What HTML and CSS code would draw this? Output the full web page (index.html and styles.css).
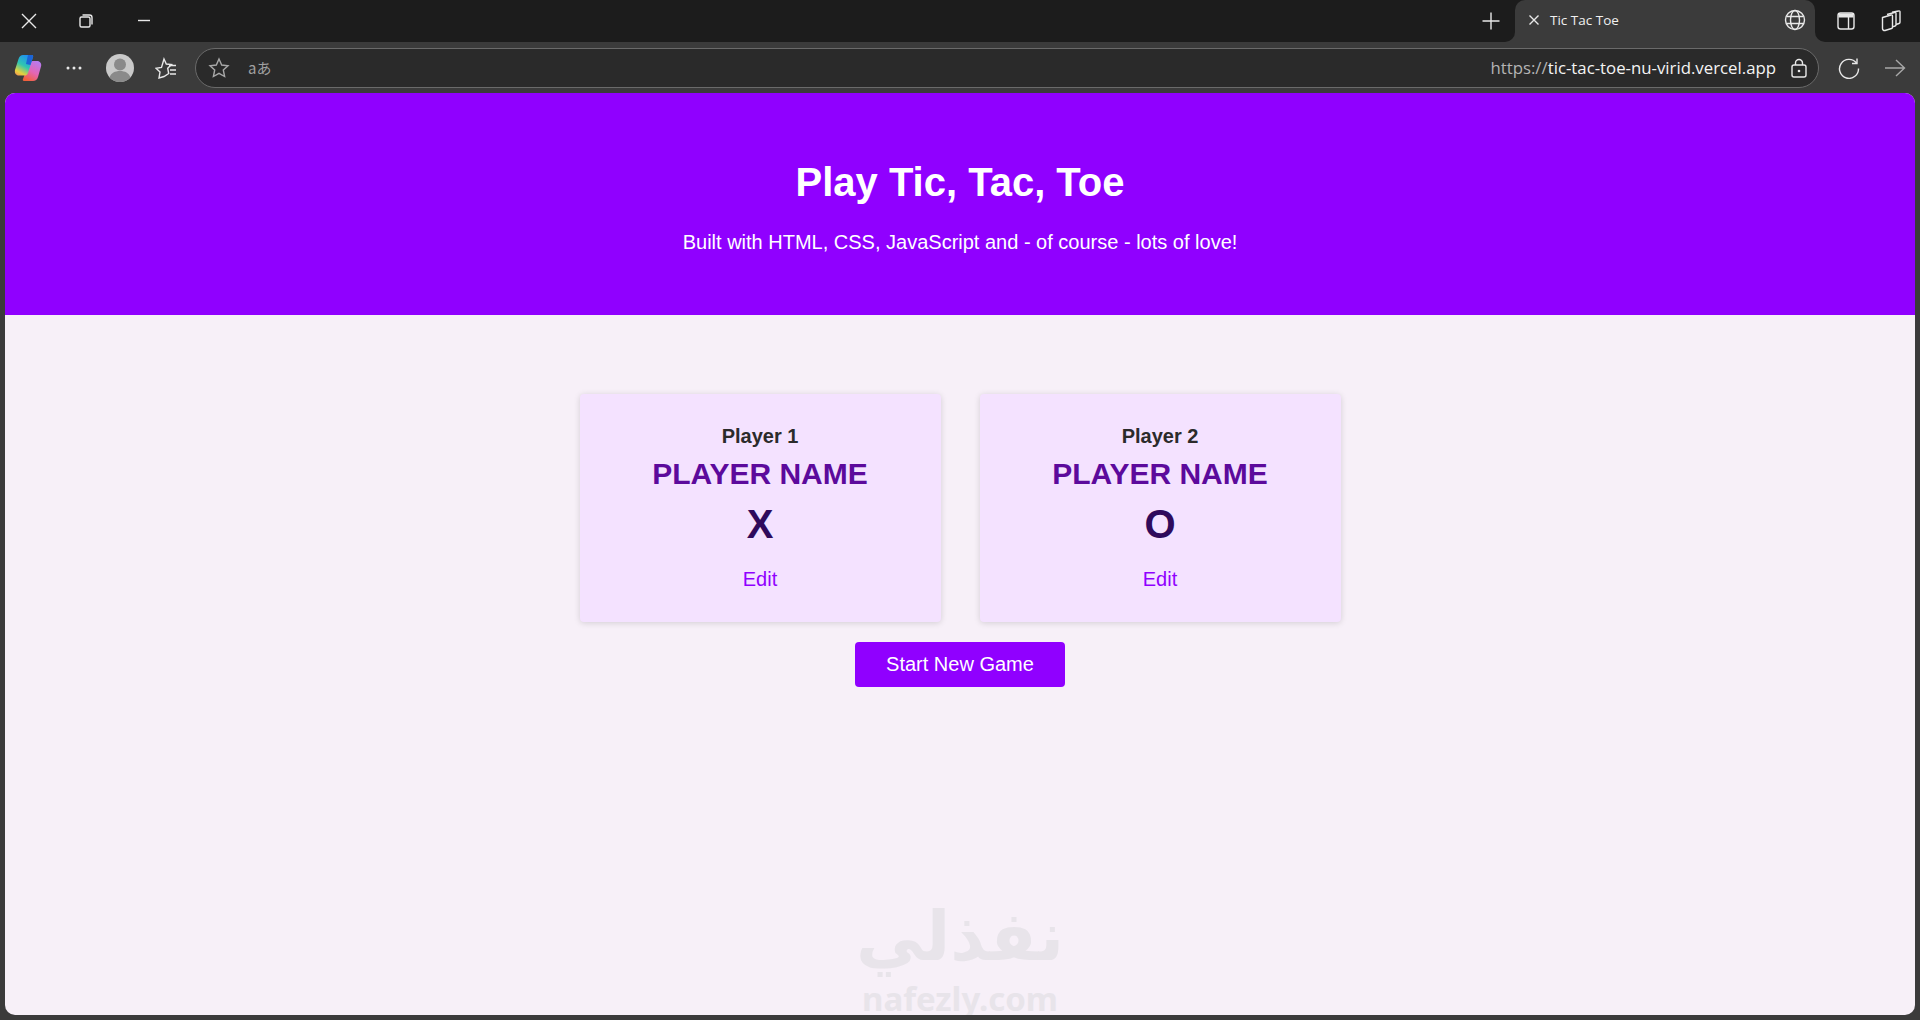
FILE: index.html

```html
<!DOCTYPE html>
<html lang="en">
<head>
    <meta charset="UTF-8">
    <meta name="viewport" content="width=device-width, initial-scale=1.0">
    <title>Tic Tac Toe</title>
    <link rel="stylesheet" href="styles.css">
</head>
<body>
    <div class="tabbar">
        <div class="tabbar-left">
            <span class="win-btn">
                <svg width="18" height="18" viewBox="0 0 18 18"><path d="M2 2l14 14M16 2L2 16" class="line"/></svg>
            </span>
            <span class="win-btn">
                <svg width="16" height="16" viewBox="0 0 16 16"><rect x="2" y="4" width="10" height="10" rx="1.5" class="line"/><path d="M4.500 2h7a2.500 2.500 0 0 1 2.500 2.500v7" class="line"/></svg>
            </span>
            <span class="win-btn">
                <svg width="14" height="14" viewBox="0 0 14 14"><path d="M1 6.500h12" class="line"/></svg>
            </span>
            <span class="tabbar-space"></span>
            <span class="new-tab">
                <svg width="20" height="20" viewBox="0 0 20 20"><path d="M10 1.500v17M1.500 10h17" class="line"/></svg>
            </span>
        </div>
        <div class="tab">
            <svg width="12" height="12" viewBox="0 0 12 12"><path d="M1.500 1.500l9 9M10.500 1.500l-9 9" class="line"/></svg>
            <span class="tab-title">Tic Tac Toe</span>
            <svg class="tab-globe" width="22" height="22" viewBox="0 0 22 22">
                <circle cx="11" cy="11" r="9.500" class="line"/>
                <ellipse cx="11" cy="11" rx="4.500" ry="9.500" class="line"/>
                <path d="M2.500 7.500h17M2.500 14.500h17" class="line"/>
            </svg>
        </div>
        <div class="tabbar-right">
            <span class="side-btn">
                <svg width="20" height="20" viewBox="0 0 20 20"><rect x="2" y="2" width="16" height="16" rx="2.500" class="line"/><path d="M2.500 2.500h15v4h-15z" fill="#e8e8e8"/><path d="M12.500 6v12" class="line"/></svg>
            </span>
            <span class="side-btn">
                <svg width="22" height="22" viewBox="0 0 22 22">
                    <path d="M2.500 7.500L11 5a1 1 0 0 1 1.500 1v11a1.500 1.500 0 0 1-1 1.500L5 20.500a2 2 0 0 1-2.500-2z" class="line"/>
                    <path d="M7 4.500l7.500-2a1 1 0 0 1 1.500 1v11a1.500 1.500 0 0 1-1 1.500l-2.500.8" class="line"/>
                    <path d="M12 2.300L18.500 1a1 1 0 0 1 1.500 1v10a1.500 1.500 0 0 1-1 1.500l-3 1" class="line"/>
                </svg>
            </span>
        </div>
    </div>

    <div class="toolbar">
        <span class="tool-btn">
            <svg width="28" height="28" viewBox="0 0 28 28">
                <defs>
                    <linearGradient id="cpLeft" x1="0.700" y1="0" x2="0.200" y2="1"><stop offset="0" stop-color="#1f8cf5"/><stop offset="0.5" stop-color="#2fc6b0"/><stop offset="0.85" stop-color="#e6d23c"/><stop offset="1" stop-color="#f0a050"/></linearGradient>
                    <linearGradient id="cpRight" x1="0.800" y1="0" x2="0.300" y2="1"><stop offset="0" stop-color="#b57cf2"/><stop offset="0.55" stop-color="#e466b4"/><stop offset="1" stop-color="#f2603c"/></linearGradient>
                </defs>
                <path d="M19 7h4c3 0 5 2.500 4 5.500L24 23c-.7 2.500-2.500 4-5 4h-9c-1 0-1.500-1-1-2l5-14c1-2.500 2.500-4 5-4z" fill="url(#cpRight)"/>
                <path d="M9 1h9c1 0 1.500 1 1 2l-5 16c-.7 2-2 2.500-3.500 2.500H5c-3 0-4.700-2.500-4-5.500L4.500 5C5.300 2.500 7 1 9 1z" fill="url(#cpLeft)"/>
                <path d="M14 1h4c1 0 1.500 1 1 2l-2.500 8-4.500-1z" fill="#1b64d6"/>
            </svg>
        </span>
        <span class="tool-btn">
            <svg width="16" height="4" viewBox="0 0 16 4"><circle cx="2" cy="2" r="1.500" fill="#e8e8e8"/><circle cx="8" cy="2" r="1.500" fill="#e8e8e8"/><circle cx="14" cy="2" r="1.500" fill="#e8e8e8"/></svg>
        </span>
        <span class="tool-btn">
            <svg width="28" height="28" viewBox="0 0 28 28"><circle cx="14" cy="14" r="14" fill="#c9c9c9"/><circle cx="14" cy="10.500" r="6" fill="#8a8a8a"/><path d="M3.500 23.500c1.500-4.500 5.500-6.500 10.500-6.500s9 2 10.500 6.500A14 14 0 0 1 14 28a14 14 0 0 1-10.500-4.500z" fill="#8a8a8a"/></svg>
        </span>
        <span class="tool-btn">
            <svg width="22" height="22" viewBox="0 0 22 22"><path d="M9 2l2.300 5 5.200.6-3.800 3.600 1 5.300L9 19.500 4 21l1-6-4-3.800 5.500-.8z" class="line"/><path d="M14 8.500h7M15 13h6M15 17h6" class="line"/></svg>
        </span>
        <div class="address">
            <svg width="22" height="22" viewBox="0 0 22 22"><path d="M11 2l2.700 6 6.300.7-4.700 4.300 1.300 6.500L11 16.300 5.400 19.500 6.700 13 2 8.700 8.300 8z" class="line dim"/></svg>
            <span class="read-aloud">aあ</span>
            <span class="url"><span class="url-scheme">https://</span>tic-tac-toe-nu-virid.vercel.app</span>
            <span class="lock">
                <svg width="18" height="20" viewBox="0 0 18 20"><rect x="2" y="7" width="14" height="12" rx="2" class="line"/><path d="M5.500 7V5a3.500 3.500 0 0 1 7 0v2" class="line"/><circle cx="9" cy="13" r="1.300" fill="#e8e8e8"/></svg>
            </span>
        </div>
        <span class="tool-btn reload">
            <svg width="22" height="22" viewBox="0 0 22 22"><path d="M18.500 6A9.500 9.500 0 1 0 20.500 11.500" class="line"/><path d="M19 1.500V6.500H14" class="line"/></svg>
        </span>
        <span class="tool-btn">
            <svg width="22" height="20" viewBox="0 0 22 20"><path d="M1 10h19.500M12 2l8.500 8-8.500 8" class="line dim"/></svg>
        </span>
    </div>

    <div class="page">
        <header class="site-header">
            <h1>Play Tic, Tac, Toe</h1>
            <p>Built with HTML, CSS, JavaScript and - of course - lots of love!</p>
        </header>
        <main>
            <ol class="players">
                <li class="player-card">
                    <h2>Player 1</h2>
                    <h3>PLAYER NAME</h3>
                    <p class="symbol">X</p>
                    <button class="edit-btn">Edit</button>
                </li>
                <li class="player-card">
                    <h2>Player 2</h2>
                    <h3>PLAYER NAME</h3>
                    <p class="symbol">O</p>
                    <button class="edit-btn">Edit</button>
                </li>
            </ol>
            <button class="start-btn">Start New Game</button>
        </main>
        <div class="watermark">
            <div class="wm-arabic" lang="ar" dir="rtl">نفذلي</div>
            <div class="wm-latin">nafezly.com</div>
        </div>
    </div>
</body>
</html>
```

FILE: styles.css

```css
* {
    box-sizing: border-box;
}
body {
    margin: 0;
    height: 100vh;
    overflow: hidden;
    display: flex;
    flex-direction: column;
    background-color: #3b3b3b;
    font-family: "Liberation Sans", Arial, sans-serif;
}
.line {
    fill: none;
    stroke: #e8e8e8;
    stroke-width: 1.4;
}
.line.dim {
    stroke: #a8a8a8;
}

/* browser tab strip */
.tabbar {
    height: 42px;
    display: flex;
    background: linear-gradient(#1c1c1c 50%, #3b3b3b 50%);
}
.tabbar-left,
.tabbar-right {
    display: flex;
    align-items: center;
    background-color: #1c1c1c;
}
.tabbar-left {
    flex: 1;
    border-bottom-right-radius: 10px;
}
.tabbar-right {
    width: 105px;
    padding-left: 8px;
    border-bottom-left-radius: 10px;
}
.win-btn {
    width: 57.5px;
    display: flex;
    justify-content: center;
}
.tabbar-space {
    flex: 1;
}
.new-tab {
    width: 48px;
    display: flex;
    justify-content: center;
}
.side-btn {
    width: 45px;
    display: flex;
    justify-content: center;
}
.tab {
    width: 300px;
    display: flex;
    align-items: center;
    padding: 0 9px 2px 13px;
    background-color: #3b3b3b;
    border-radius: 10px 10px 0 0;
}
.tab-title {
    margin-left: 10px;
    color: #f0f0f0;
    font-family: "Open Sans", sans-serif;
    font-size: 13.500px;
}
.tab-globe {
    margin-left: auto;
}

/* address bar row */
.toolbar {
    height: 51px;
    display: flex;
    align-items: center;
    padding: 0 2px 0 5px;
}
.tool-btn {
    width: 46px;
    display: flex;
    justify-content: center;
}
.tool-btn.reload {
    margin-left: 7px;
}
.address {
    flex: 1;
    height: 40px;
    margin-left: 6px;
    display: flex;
    align-items: center;
    padding: 0 10px 0 12px;
    background-color: #2a2a2a;
    border: 1px solid #6a6a6a;
    border-radius: 20px;
}
.read-aloud {
    margin-left: 18px;
    color: #a0a0a0;
    font-family: "Noto Sans CJK JP", sans-serif;
    font-size: 15px;
}
.url {
    margin-left: auto;
    color: #f4f4f4;
    font-family: "Open Sans", sans-serif;
    font-size: 16.800px;
}
.url-scheme {
    color: #b4b4b4;
}
.lock {
    margin-left: 14px;
    display: flex;
}

/* page */
.page {
    position: relative;
    flex: 1;
    margin: 0 5px 5px;
    overflow: hidden;
    background-color: #f7f0f8;
    border-radius: 10px;
}
.site-header {
    height: 222px;
    padding-top: 64px;
    text-align: center;
    color: #fff;
    background-color: #9000ff;
}
.site-header h1 {
    margin: 0;
    font-size: 40px;
    line-height: 50px;
}
.site-header p {
    margin: 23px 0 0;
    font-size: 20px;
    line-height: 24px;
}
main {
    text-align: center;
}
.players {
    list-style: none;
    margin: 79px 0 0;
    padding: 0;
    display: flex;
    justify-content: center;
    gap: 39px;
}
.player-card {
    width: 361px;
    height: 228px;
    padding-top: 30px;
    background-color: #f4e2ff;
    border-radius: 4px;
    box-shadow: 0 1px 6px rgba(0, 0, 0, 0.15);
}
.player-card h2 {
    margin: 0;
    color: #2b2b2b;
    font-size: 20px;
    line-height: 24px;
}
.player-card h3 {
    margin: 2px 0 0;
    color: #5c0a9c;
    font-size: 30px;
    line-height: 48px;
}
.symbol {
    margin: 0;
    color: #2f0a5c;
    font-size: 40px;
    font-weight: bold;
    line-height: 52px;
}
.edit-btn {
    margin-top: 15px;
    padding: 0;
    border: none;
    background: none;
    color: #9000ff;
    font-family: inherit;
    font-size: 20px;
    line-height: 28px;
}
.start-btn {
    display: block;
    width: 210px;
    height: 45px;
    margin: 20px auto 0;
    border: none;
    border-radius: 4px;
    background-color: #9000ff;
    color: #fff;
    font-family: inherit;
    font-size: 20px;
}

/* site watermark, its lower edge is cut by the window as in the real page */
.watermark {
    position: absolute;
    left: 850px;
    top: 804px;
    width: 210px;
    color: #e8e4ea;
    text-align: center;
}
.wm-arabic {
    font-family: "DejaVu Sans", sans-serif;
    font-size: 68px;
    font-weight: bold;
    line-height: 79px;
}
.wm-latin {
    font-family: "Noto Sans", sans-serif;
    font-size: 33px;
    font-weight: bold;
    line-height: 45px;
}
```
